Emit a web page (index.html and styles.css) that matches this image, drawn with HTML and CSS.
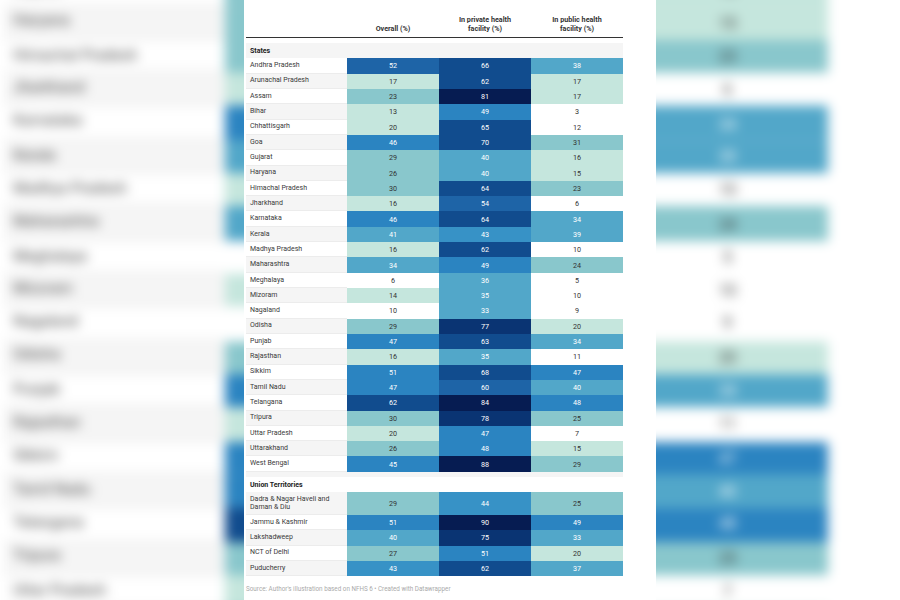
FILE: index.html
```html
<!DOCTYPE html>
<html lang="en">
<head>
<meta charset="utf-8">
<title>Caesarean deliveries by state</title>
<link rel="stylesheet" href="styles.css">
</head>
<body>
<div class="stage">
  <div class="backdrop" aria-hidden="true"></div>
  <div class="panel">
    <div class="table">
      <div class="head">
        <div></div>
        <div class="hc">Overall (%)</div>
        <div class="hc">In private health<br>facility (%)</div>
        <div class="hc">In public health<br>facility (%)</div>
      </div>

      <div class="sec s">States</div>
      <div class="r"><div class="l">Andhra Pradesh</div><div class="v h6">52</div><div class="v h7">66</div><div class="v h3">38</div></div>
      <div class="r s"><div class="l">Arunachal Pradesh</div><div class="v h1">17</div><div class="v h7">62</div><div class="v h1">17</div></div>
      <div class="r"><div class="l">Assam</div><div class="v h2">23</div><div class="v h9">81</div><div class="v h1">17</div></div>
      <div class="r s"><div class="l">Bihar</div><div class="v h1">13</div><div class="v h5">49</div><div class="v h0">3</div></div>
      <div class="r"><div class="l">Chhattisgarh</div><div class="v h1">20</div><div class="v h7">65</div><div class="v h0">12</div></div>
      <div class="r s"><div class="l">Goa</div><div class="v h5">46</div><div class="v h7">70</div><div class="v h2">31</div></div>
      <div class="r"><div class="l">Gujarat</div><div class="v h2">29</div><div class="v h3">40</div><div class="v h1">16</div></div>
      <div class="r s"><div class="l">Haryana</div><div class="v h2">26</div><div class="v h3">40</div><div class="v h1">15</div></div>
      <div class="r"><div class="l">Himachal Pradesh</div><div class="v h2">30</div><div class="v h7">64</div><div class="v h2">23</div></div>
      <div class="r s"><div class="l">Jharkhand</div><div class="v h1">16</div><div class="v h6">54</div><div class="v h0">6</div></div>
      <div class="r"><div class="l">Karnataka</div><div class="v h5">46</div><div class="v h7">64</div><div class="v h3">34</div></div>
      <div class="r s"><div class="l">Kerala</div><div class="v h3">41</div><div class="v h4">43</div><div class="v h3">39</div></div>
      <div class="r"><div class="l">Madhya Pradesh</div><div class="v h1">16</div><div class="v h7">62</div><div class="v h0">10</div></div>
      <div class="r s"><div class="l">Maharashtra</div><div class="v h3">34</div><div class="v h5">49</div><div class="v h2">24</div></div>
      <div class="r"><div class="l">Meghalaya</div><div class="v h0">6</div><div class="v h3">36</div><div class="v h0">5</div></div>
      <div class="r s"><div class="l">Mizoram</div><div class="v h1">14</div><div class="v h3">35</div><div class="v h0">10</div></div>
      <div class="r"><div class="l">Nagaland</div><div class="v h0">10</div><div class="v h3">33</div><div class="v h0">9</div></div>
      <div class="r s"><div class="l">Odisha</div><div class="v h2">29</div><div class="v h8">77</div><div class="v h1">20</div></div>
      <div class="r"><div class="l">Punjab</div><div class="v h5">47</div><div class="v h7">63</div><div class="v h3">34</div></div>
      <div class="r s"><div class="l">Rajasthan</div><div class="v h1">16</div><div class="v h3">35</div><div class="v h0">11</div></div>
      <div class="r"><div class="l">Sikkim</div><div class="v h5">51</div><div class="v h7">68</div><div class="v h5">47</div></div>
      <div class="r s"><div class="l">Tamil Nadu</div><div class="v h5">47</div><div class="v h6">60</div><div class="v h3">40</div></div>
      <div class="r"><div class="l">Telangana</div><div class="v h7">62</div><div class="v h9">84</div><div class="v h5">48</div></div>
      <div class="r s"><div class="l">Tripura</div><div class="v h2">30</div><div class="v h8">78</div><div class="v h2">25</div></div>
      <div class="r"><div class="l">Uttar Pradesh</div><div class="v h1">20</div><div class="v h5">47</div><div class="v h0">7</div></div>
      <div class="r s"><div class="l">Uttarakhand</div><div class="v h2">26</div><div class="v h5">48</div><div class="v h1">15</div></div>
      <div class="r"><div class="l">West Bengal</div><div class="v h5">45</div><div class="v h9">88</div><div class="v h2">29</div></div>

      <div class="spacer s"></div>
      <div class="sec">Union Territories</div>
      <div class="r s tall"><div class="l">Dadra &amp; Nagar Haveli and Daman &amp; Diu</div><div class="v h2">29</div><div class="v h4">44</div><div class="v h2">25</div></div>
      <div class="r"><div class="l">Jammu &amp; Kashmir</div><div class="v h5">51</div><div class="v h9">90</div><div class="v h5">49</div></div>
      <div class="r s"><div class="l">Lakshadweep</div><div class="v h3">40</div><div class="v h8">75</div><div class="v h3">33</div></div>
      <div class="r"><div class="l">NCT of Delhi</div><div class="v h2">27</div><div class="v h5">51</div><div class="v h1">20</div></div>
      <div class="r s"><div class="l">Puducherry</div><div class="v h4">43</div><div class="v h7">62</div><div class="v h3">37</div></div>
    </div>
    <div class="foot">Source: Author's illustration based on NFHS 6 • Created with Datawrapper</div>
  </div>
</div>
<script src="script.js"></script>
</body>
</html>
```

FILE: styles.css
```css
html, body {
  margin: 0;
  padding: 0;
  background: #fff;
}

.stage {
  position: relative;
  width: 900px;
  height: 600px;
  overflow: hidden;
  display: flex;
  justify-content: center;
  background: #fff;
  font-family: Roboto, "Liberation Sans", sans-serif;
  color: #333;
}

/* blurred, enlarged copy of the chart behind the panel */
.backdrop {
  position: absolute;
  inset: 0;
  z-index: 0;
  filter: blur(6px);
}

.panel {
  position: relative;
  z-index: 1;
  width: 412px;
  height: 600px;
  box-sizing: border-box;
  padding-left: 2px;
  background: #fff;
}

.backdrop .panel-ghost {
  position: absolute;
  left: 244px;
  top: 0;
  transform: scale(2.185);
  transform-origin: 50% 50%;
}

.table {
  width: 377px;
}

.head {
  display: grid;
  grid-template-columns: 101px 92px 92px 92px;
  align-items: end;
  height: 38px;
  box-sizing: border-box;
  padding-bottom: 3.4px;
  border-bottom: 1px solid #333;
  margin-bottom: 5px;
}

.hc {
  text-align: center;
  font-weight: 700;
  font-size: 7.2px;
  line-height: 8.6px;
  color: #333;
}

.sec {
  height: 15.32px;
  display: flex;
  align-items: center;
  padding-left: 4px;
  font-weight: 700;
  font-size: 7px;
  color: #222;
}

.r {
  display: grid;
  grid-template-columns: 101px 92px 92px 92px;
  height: 15.32px;
}

.r.tall {
  height: 22.6px;
}

.s {
  background: #f5f5f5;
}

.spacer {
  height: 5.3px;
}

.l {
  display: flex;
  align-items: center;
  box-sizing: border-box;
  padding: 0 6px 0 4px;
  font-size: 7px;
  line-height: 8.6px;
  color: #3a3a3a;
  border-bottom: 1px solid #ececec;
}

.v {
  display: flex;
  align-items: center;
  justify-content: center;
  font-size: 7.2px;
  color: #fff;
}

.h0 { background: #ffffff; color: #333; }
.h1 { background: #c5e6dd; color: #333; }
.h2 { background: #89c7cc; color: #333; }
.h3 { background: #52a7c9; }
.h4 { background: #3792c6; }
.h5 { background: #2b84c1; }
.h6 { background: #1e64a7; }
.h7 { background: #114c8e; }
.h8 { background: #0a3473; }
.h9 { background: #061c52; }

.foot {
  margin-top: 8.3px;
  font-size: 6.3px;
  line-height: 8px;
  color: #aaa;
}
```

FILE: script.js
```js
(function () {
  var panel = document.querySelector('.stage > .panel');
  var backdrop = document.querySelector('.backdrop');
  if (!panel || !backdrop) return;
  var ghost = panel.cloneNode(true);
  ghost.classList.add('panel-ghost');
  backdrop.appendChild(ghost);
})();
```
